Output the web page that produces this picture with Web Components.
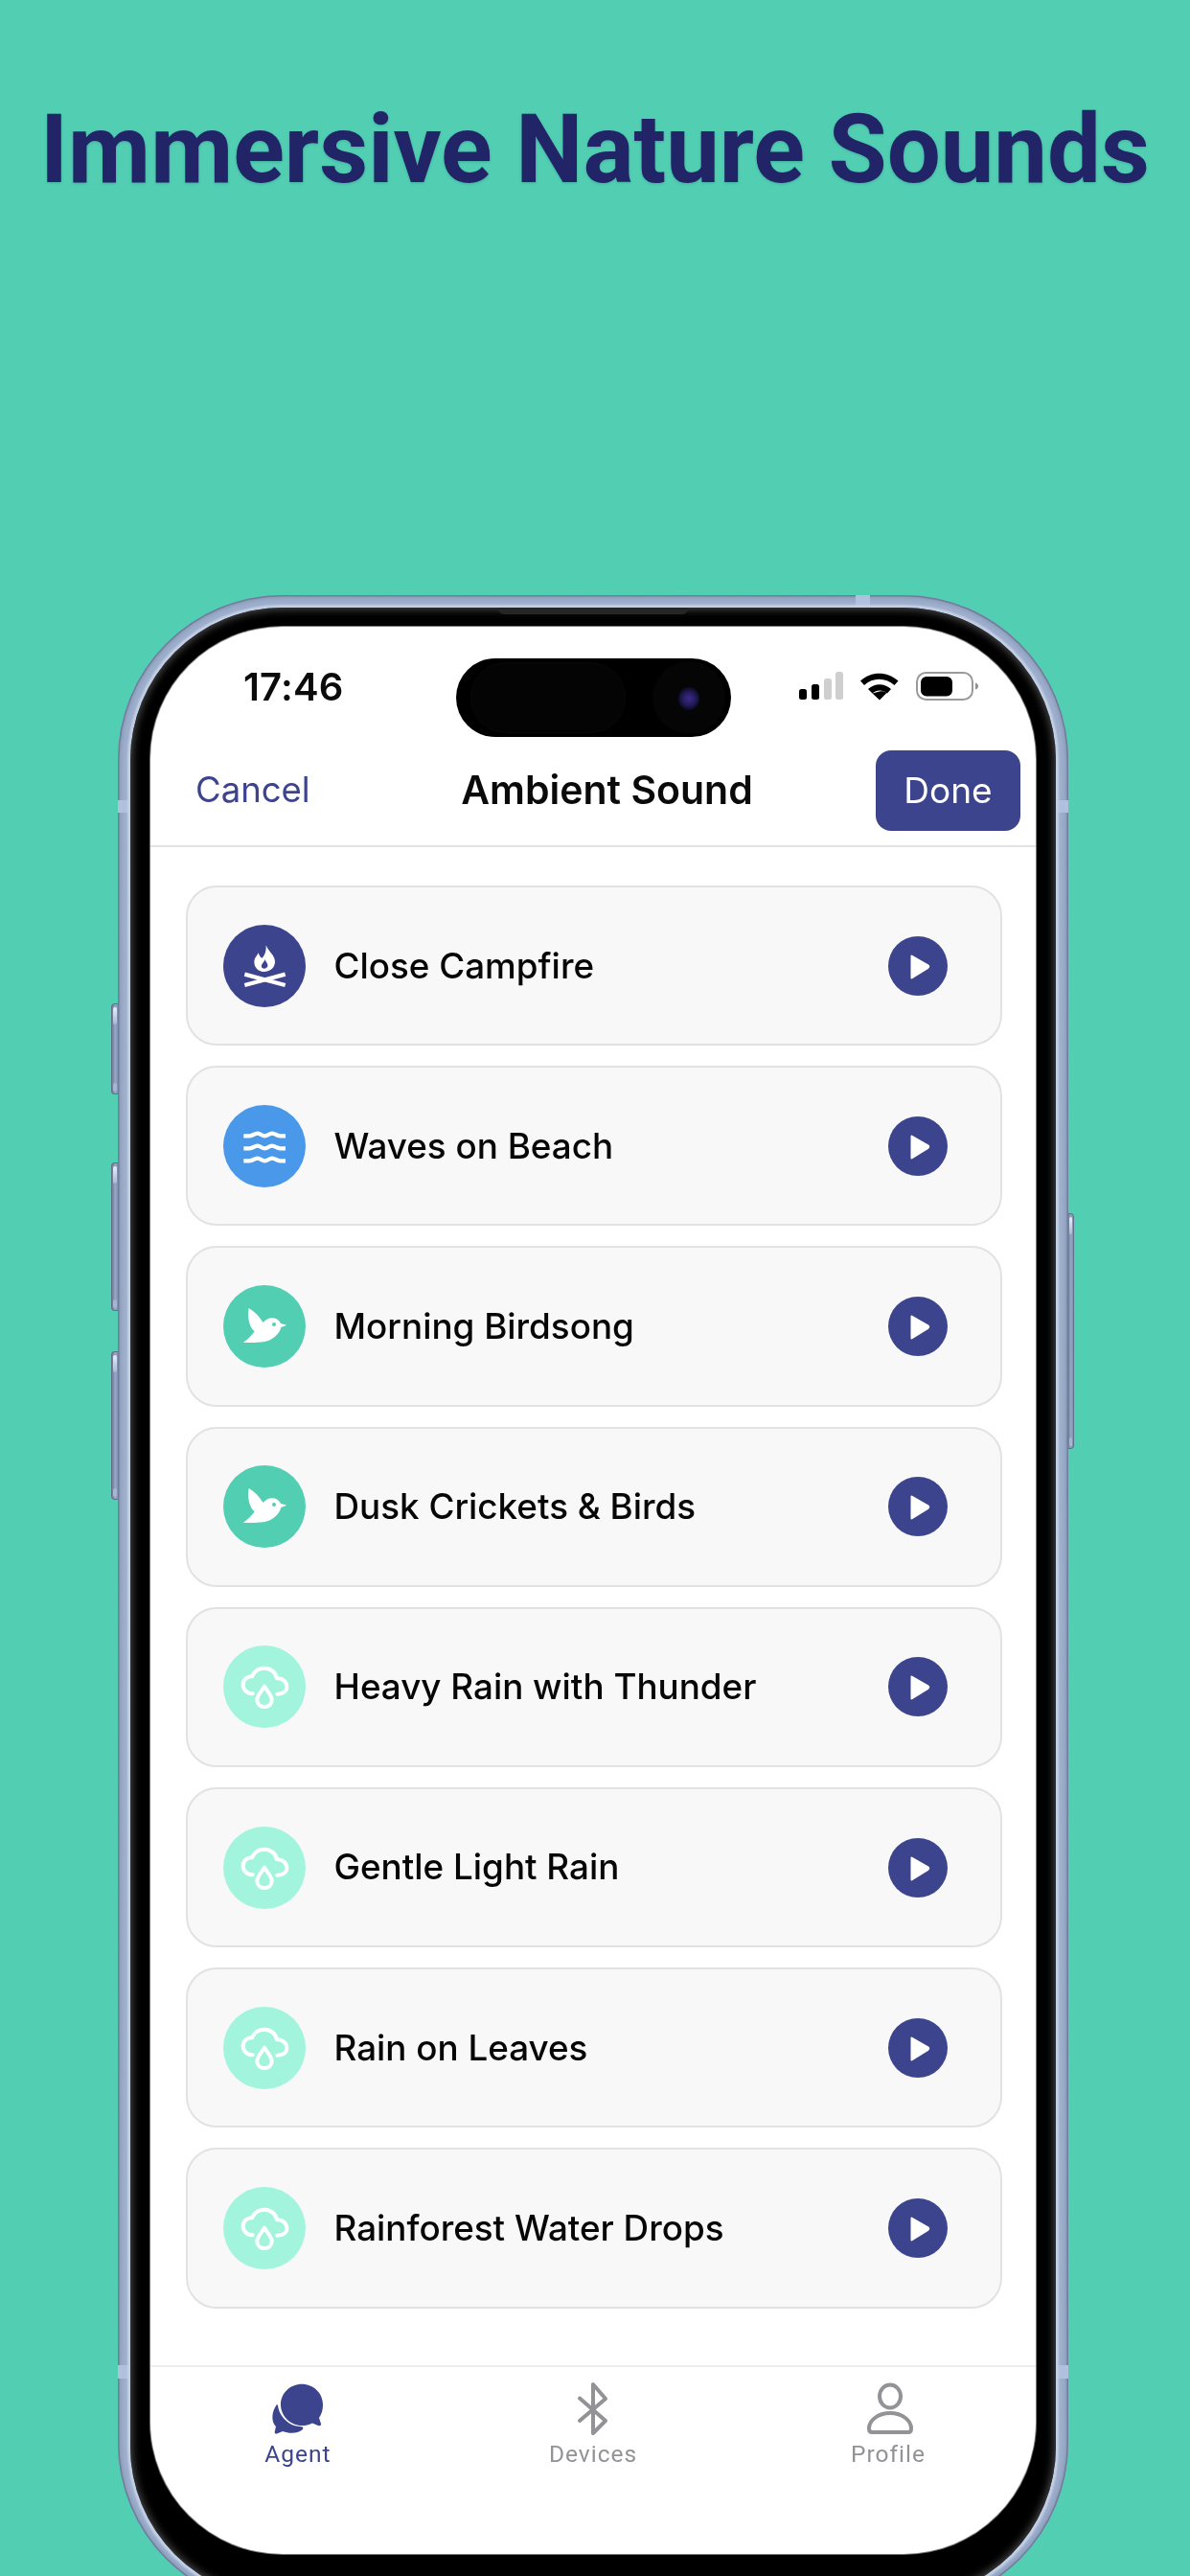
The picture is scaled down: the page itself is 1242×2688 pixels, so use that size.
<!DOCTYPE html>
<html lang="en">
<head>
<meta charset="utf-8">
<title>Immersive Nature Sounds</title>
<style>
html,body{margin:0;padding:0;background:#52cfb3;}
body{width:1242px;height:2688px;overflow:hidden;font-family:Inter,"Liberation Sans",sans-serif;}
</style>
</head>
<body>
<promo-page>
  <span slot="headline">Immersive Nature Sounds</span>
  <phone-frame>
    <status-bar time="17:46"></status-bar>
    <nav-bar heading="Ambient Sound" cancel="Cancel" done="Done"></nav-bar>
    <sound-list>
      <sound-card icon="fire" tint="#3c448e">Close Campfire</sound-card>
      <sound-card icon="waves" tint="#4a98e9">Waves on Beach</sound-card>
      <sound-card icon="bird" tint="#52cfb3">Morning Birdsong</sound-card>
      <sound-card icon="bird" tint="#52cfb3">Dusk Crickets &amp; Birds</sound-card>
      <sound-card icon="rain" tint="#a2f5dc">Heavy Rain with Thunder</sound-card>
      <sound-card icon="rain" tint="#a2f5dc">Gentle Light Rain</sound-card>
      <sound-card icon="rain" tint="#a2f5dc">Rain on Leaves</sound-card>
      <sound-card icon="rain" tint="#a2f5dc">Rainforest Water Drops</sound-card>
    </sound-list>
    <tab-bar>
      <tab-item icon="agent" active>Agent</tab-item>
      <tab-item icon="bluetooth">Devices</tab-item>
      <tab-item icon="profile">Profile</tab-item>
    </tab-bar>
  </phone-frame>
</promo-page>

<script>
function def(name, html){
  customElements.define(name, class extends HTMLElement{
    constructor(){
      super();
      this.attachShadow({mode:'open'});
    }
    connectedCallback(){
      this.shadowRoot.innerHTML = typeof html==='function' ? html(this) : html;
    }
  });
}

def('promo-page', `
<style>
:host{display:block;width:1242px;height:2688px;overflow:hidden;background:#52cfb3;}
h1{margin:0;height:621px;box-sizing:border-box;padding-top:99px;text-align:center;
  font:700 99.300px/1.16 Roboto,"Liberation Sans",sans-serif;color:#212567;white-space:nowrap;
  text-shadow:0 1px 3px rgba(20,40,90,.22);}
</style>
<h1><slot name="headline"></slot></h1>
<slot></slot>`);

def('phone-frame', `
<style>
:host{display:block;position:relative;width:992px;height:2100px;margin-left:123px;}
.metal{position:relative;box-sizing:border-box;height:100%;padding:13px;border-radius:172px;overflow:hidden;
  background:#9cadca;box-shadow:inset 0 0 0 1.5px #6c7c99, inset 0 0 4px 3px #8596b5;}
.grain{position:absolute;inset:0;width:100%;height:100%;opacity:.14;mix-blend-mode:soft-light;}
.bezel{position:relative;box-sizing:border-box;height:2078px;padding:20px 21px;border-radius:159px;background:#000;
  box-shadow:0 0 2px 2.5px #c3d0e8, inset 0 0 9px 2px #4a4a4a;}
.screen{display:flex;flex-direction:column;height:2011px;background:#fff;border-radius:138px;overflow:hidden;
  box-shadow:0 0 0 1px #777;}
.speaker{position:absolute;left:384px;top:0;width:198px;height:7px;background:#262626;border-radius:0 0 6px 6px;}
.band{position:absolute;background:#b1c0dc;}
.btn{position:absolute;width:7px;background:linear-gradient(90deg,#6d7d9a,#98a8c5 55%,#7f90ae);border:1px solid #5f6f8c;box-sizing:border-box;border-right:0;border-radius:4px 0 0 4px;}
.btn::before{content:"";position:absolute;left:1px;right:1px;top:3px;height:18px;border-radius:3px;background:linear-gradient(#e8eefa,#aab7d1);}
.btn::after{content:"";position:absolute;left:1px;right:1px;bottom:2px;height:9px;border-radius:3px;background:#a8b5cf;}
.r{border-left:0;border-right:1px solid #5f6f8c;border-radius:0 4px 4px 0;width:6px;}
</style>
<div class="btn" style="left:-7px;top:426px;height:95px"></div>
<div class="btn" style="left:-7px;top:592px;height:155px"></div>
<div class="btn" style="left:-7px;top:789px;height:155px"></div>
<div class="btn r" style="left:992px;top:645px;height:246px"></div>
<div class="metal">
  <svg class="grain" aria-hidden="true"><filter id="n"><feTurbulence type="fractalNoise" baseFrequency="1.1" numOctaves="2"/><feColorMatrix type="saturate" values="0"/></filter><rect width="100%" height="100%" filter="url(#n)"/></svg>
  <div class="band" style="left:0;top:214px;width:13px;height:13px"></div>
  <div class="band" style="right:0;top:214px;width:13px;height:13px"></div>
  <div class="band" style="left:770px;top:0;width:15px;height:13px"></div>
  <div class="band" style="left:0;top:1847px;width:13px;height:14px"></div>
  <div class="band" style="right:0;top:1847px;width:13px;height:14px"></div>
  <div class="bezel">
    <div class="speaker"></div>
    <div class="screen"><slot></slot></div>
  </div>
</div>`);

def('status-bar', el => `
<style>
:host{display:block;position:relative;height:117px;flex:none;}
.time{position:absolute;left:97px;top:43px;font:600 40px/1 Inter,"Liberation Sans",sans-serif;color:#0b0b0b;letter-spacing:.2px;}
.island{position:absolute;left:319px;top:33px;width:287px;height:82px;border-radius:41px;background:#000;}
.island i{position:absolute;border-radius:50%;}
.s1{left:16px;top:5px;width:160px;height:72px;background:#040404;border-radius:36px!important;box-shadow:0 0 0 1px #090909;}
.s2{left:205px;top:3px;width:76px;height:76px;background:#050505;}
.s3{left:232px;top:30px;width:22px;height:24px;background:radial-gradient(circle,#3d2a8c 0,#241c5c 40%,#0a0c26 70%,#050510 100%);}
svg{position:absolute;left:677px;top:47px;}
</style>
<div class="time">${el.getAttribute('time')}</div>
<div class="island"><i class="s1"></i><i class="s2"></i><i class="s3"></i></div>
<svg width="190" height="32" viewBox="0 0 190 32" aria-hidden="true">
  <rect x="0" y="18" width="8" height="11" rx="2.5" fill="#000"/>
  <rect x="13" y="13" width="8" height="16" rx="2.5" fill="#000"/>
  <rect x="26" y="7" width="8" height="22" rx="2.5" fill="#cfcfcf"/>
  <rect x="38" y="0" width="8" height="29" rx="2.5" fill="#cfcfcf"/>
  <path d="M64 9.5C75 -1 92 -1 103.5 9.5l-4 4.5C90 5.5 77 5.5 68 14z M72 18C79 11.5 89 11.5 96 18l-4 4.5c-4.5-4-11-4-15.500 0z" fill="#000"/>
  <path d="M84 20.500l-7.500 2 7.500 7 7.500-7.500c-2.500-2-5-2-7.500-1.500z" fill="#000"/>
  <rect x="123" y="1" width="58" height="28" rx="9.500" fill="#fff" stroke="#9a9a9a" stroke-width="2"/>
  <rect x="127" y="5" width="33" height="20.500" rx="6" fill="#000"/>
  <path d="M184 11.500c2 .5 3 2 3 3.500s-1 3-3 3.500z" fill="#8f8f8f"/>
</svg>`);

def('nav-bar', el => `
<style>
:host{display:block;position:relative;flex:none;height:113px;box-sizing:border-box;border-bottom:2px solid #e2e2e2;}
.row{display:flex;align-items:flex-start;height:100%;font-family:Inter,"Liberation Sans",sans-serif;}
.cancel{margin:30px 0 0 47px;width:277px;font-size:36.500px;line-height:46px;color:#3c448e;}
.title{width:305px;margin-top:28px;font-size:41px;font-weight:600;line-height:50px;color:#0a0a0a;white-space:nowrap;text-align:center;}
.done{margin:12px 0 0 128px;width:151px;height:84px;box-sizing:border-box;border-radius:16px;background:#3c448e;color:#fff;
  font-size:37px;line-height:84px;text-align:center;}
</style>
<div class="row">
  <div class="cancel">${el.getAttribute('cancel')}</div>
  <div class="title">${el.getAttribute('heading')}</div>
  <div class="done">${el.getAttribute('done')}</div>
</div>`);

def('sound-list', `
<style>
:host{display:flex;flex-direction:column;flex:1;min-height:0;gap:21px;box-sizing:border-box;padding:40px 35px 0 36.500px;}
</style>
<slot></slot>`);

const ICONS = {
  fire:{vb:'98 104 258 258', c:c=>`
    <path fill="#fff" fill-rule="evenodd" d="M232 168C240 190 262 200 260 222C258 242 242 251 227 251C209 251 195 238 195 220C195 208 204 201 208 192C212 202 214 206 220 208C228 200 233 186 232 168ZM229 212C226 222 216 226 218 236C220 243 234 243 237 234C239 226 232 222 229 212Z"/>
    <path fill="none" stroke="#fff" stroke-width="13" d="M165 259L292 293M165 293L292 259"/>`},
  waves:{vb:'98 668 258 258', c:c=>`
    <g fill="none" stroke="#fff" stroke-width="13">
    <path d="M162 765H180C192 765 195 757 205 757C215 757 218 765 228 765C238 765 241 757 251 757C261 757 265 765 276 765H293"/>
    <path d="M162 804H180C192 804 195 796 205 796C215 796 218 804 228 804C238 804 241 796 251 796C261 796 265 804 276 804H293"/>
    <path d="M162 843H180C192 843 195 835 205 835C215 835 218 843 228 843C238 843 241 835 251 835C261 835 265 843 276 843H293"/></g>`},
  bird:{vb:'40 63 258 258', c:c=>`
    <path fill="#fff" d="M120 135C138 146 154 162 165 180C174 168 186 164 198 166C208 168 216 175 220 183L239 188L221 195C216 215 196 236 165 241C145 244 122 243 102 243C116 233 128 222 138 208C124 196 114 168 120 135Z"/>
    <circle cx="199" cy="186" r="6" fill="${c}"/>`},
  rain:{vb:'98 112 258 258', c:c=>`
    <g fill="none" stroke="#fff" stroke-width="12" stroke-linecap="round" stroke-linejoin="round">
    <path d="M190 263C172 263 160 250 160 235C160 219 173 208 188 209C195 193 210 183 227 183C246 183 262 196 266 215C284 213 297 227 297 242C297 254 287 264 267 264"/>
    <path d="M227 240C235 254 250 268 250 282C250 295 240 304 227 304C214 304 204 295 204 282C204 268 219 254 227 240Z"/></g>`}
};

def('sound-card', el => {
  const ic = ICONS[el.getAttribute('icon')], t = el.getAttribute('tint');
  return `
<style>
:host{display:flex;align-items:center;box-sizing:border-box;height:167.200px;flex:none;background:#f8f8f8;border:2.500px solid #e2e2e2;border-radius:32px;padding:0 55px 0 37px;
  font:500 36.800px/1.2 Inter,"Liberation Sans",sans-serif;color:#060606;}
.ic{width:86px;height:86px;border-radius:50%;background:${t};flex:none;display:block;}
.tx{flex:1;margin-left:30px;white-space:nowrap;}
.play{width:62px;height:62px;flex:none;display:block;}
</style>
<svg class="ic" viewBox="${ic.vb}" aria-hidden="true">${ic.c(t)}</svg>
<div class="tx"><slot></slot></div>
<svg class="play" viewBox="0 0 62 62" aria-hidden="true"><circle cx="31" cy="31" r="31" fill="#3c448e"/><path d="M24.500 20.500V43.500L41.500 32.800Q43 31.500 41.500 30.300Z" fill="#fff" stroke="#fff" stroke-width="2" stroke-linejoin="round"/></svg>`;
});

def('tab-bar', `
<style>
:host{display:grid;grid-template-columns:repeat(3,1fr);flex:none;height:197px;box-sizing:border-box;border-top:2px solid #ececec;padding-top:15px;}
</style>
<slot></slot>`);

const TABS = {
  agent:`<path fill="currentColor" d="M8 24C2 32 2 42 7 47L5.600 53Q5.600 55 8 54.500L14 52C22 55 31 54 35 50C36 48 35 47 32 47C22 47 12 38 9.500 28C9 25 9 24 8 24Z"/><path fill="currentColor" d="M34 2.700C46 2.700 56 12 56 24C56 31 54 35 52 38L54 44Q54.500 47 51 46L45 43.500C41 45.500 38 46 34 46C22 46 12 36 12 24C12 12 22 2.700 34 2.700Z"/>`,
  bluetooth:`<path fill="none" stroke="currentColor" stroke-width="4" stroke-linecap="round" stroke-linejoin="round" d="M16 17.500L43 41L30 54V3L43 18L16 41"/>`,
  profile:`<g fill="none" stroke="currentColor" stroke-width="4" stroke-linejoin="round"><ellipse cx="32" cy="15.500" rx="11" ry="12"/><path d="M10 49C10 41 19 33 32 33C45 33 54 41 54 49C54 52 53 53 51 53H13C11 53 10 52 10 49Z"/></g>`
};
def('tab-item', el => `
<style>
:host{display:flex;flex-direction:column;align-items:center;color:${el.hasAttribute('active')?'#3c448e':'#929297'};
  font:400 24.500px/28px Roboto,"Liberation Sans",sans-serif;letter-spacing:1px;}
svg{display:block;width:60px;height:58px;}
.l{margin-top:4px;}
</style>
<svg viewBox="0 0 60 58" aria-hidden="true">${TABS[el.getAttribute('icon')]}</svg>
<div class="l"><slot></slot></div>`);
</script>
</body>
</html>
